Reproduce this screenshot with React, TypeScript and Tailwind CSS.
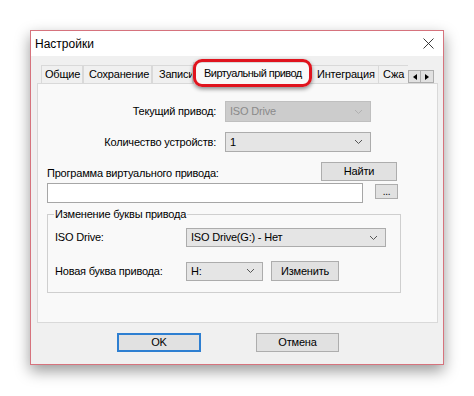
import React from "react";

function Chevron({ muted }: { muted?: boolean }) {
  return (
    <svg width="9" height="6" viewBox="0 0 9 6" className="shrink-0">
      <path d="M1 1 L4.5 4.5 L8 1" fill="none" stroke={muted ? "#b0b0b0" : "#555"} strokeWidth="1" />
    </svg>
  );
}

function Combo({ value, className, disabled }: { value: string; className: string; disabled?: boolean }) {
  return (
    <div
      className={
        "flex items-center justify-between border pl-[4px] pr-[7px] " +
        (disabled ? "bg-[#cccccc] border-[#bfbfbf] text-[#8a8a8a] " : "bg-[#e5e5e5] border-[#acacac] text-black ") +
        className
      }
    >
      <span className="leading-none">{value}</span>
      <Chevron muted={disabled} />
    </div>
  );
}

function Btn({ children, className }: { children: React.ReactNode; className: string }) {
  return (
    <div className={"flex items-center justify-center border border-[#adadad] bg-[#e1e1e1] leading-none " + className}>
      {children}
    </div>
  );
}

const tabs = [
  { label: "Общие", cls: "w-[42px] pl-[3px]" },
  { label: "Сохранение", cls: "w-[69px] pl-[5px]" },
  { label: "Записи", cls: "w-[41px] pl-[6px]" },
];

export default function App() {
  return (
    <div className="w-[474px] h-[396px] bg-white overflow-hidden pt-[30px] pl-[30px] font-['Liberation_Sans',Arial,sans-serif] text-[11px] tracking-[-0.2px] text-black">
      <div className="w-[414px] h-[335px] border border-[#d6737d] bg-[#f0f0f0] flex flex-col shadow-[0_6px_14px_rgba(0,0,0,0.4)]">
        {/* title bar */}
        <div className="h-[25px] bg-white flex items-center justify-between pl-[4px] pr-[9px]">
          <span className="text-[12px] tracking-normal">Настройки</span>
          <svg width="11" height="11" viewBox="0 0 11 11">
            <path d="M0.5 0.5 L10.5 10.5 M10.5 0.5 L0.5 10.5" stroke="#222" strokeWidth="0.9" />
          </svg>
        </div>

        <div className="px-[6px]">
          {/* tab strip */}
          <div className="relative h-[27px] flex items-end pl-[4px]">
            {tabs.map((t) => (
              <div
                key={t.label}
                className={"h-[18px] overflow-hidden whitespace-nowrap border border-b-0 border-[#d9d9d9] bg-[#f0f0f0] flex items-center " + t.cls}
              >
                {t.label}
              </div>
            ))}
            <div className="relative z-10 -mb-px h-[22px] w-[117px] pl-[10px] border border-b-0 border-[#d9d9d9] bg-[#f9f9f9] flex items-center whitespace-nowrap tracking-[-0.55px]">
              Виртуальный привод
            </div>
            <div className="h-[18px] w-[69px] pl-[6px] border border-b-0 border-[#d9d9d9] bg-[#f0f0f0] flex items-center whitespace-nowrap">
              Интеграция
            </div>
            <div className="h-[18px] w-[29px] pl-[4px] border-t border-[#d9d9d9] bg-[#f0f0f0] flex items-center whitespace-nowrap">
              Сжа
            </div>
            <div className="flex self-start mt-[14px]">
              <div className="w-[13px] h-[13px] border border-[#adadad] bg-[#e1e1e1] flex items-center justify-center">
                <svg width="4" height="6" viewBox="0 0 4 6">
                  <path d="M4 0 L0 3 L4 6 Z" fill="#000" />
                </svg>
              </div>
              <div className="w-[13px] h-[13px] border border-l-0 border-[#adadad] bg-[#e1e1e1] flex items-center justify-center">
                <svg width="4" height="6" viewBox="0 0 4 6">
                  <path d="M0 0 L4 3 L0 6 Z" fill="#000" />
                </svg>
              </div>
            </div>
            {/* red highlight around the selected tab */}
            <div className="absolute left-[156px] top-[3px] w-[119px] h-[28px] z-20 rounded-[9px] border-[3px] border-[#e0141e] shadow-[0_2px_4px_rgba(0,0,0,0.45)]" />
          </div>

          {/* tab page */}
          <div className="w-[401px] h-[240px] border border-[#d9d9d9] bg-[#f9f9f9] pl-[9px] pt-[17px]">
            <div className="flex items-center h-[21px]">
              <span className="w-[169px] text-right">Текущий привод:</span>
              <Combo value="ISO Drive" disabled className="ml-[9px] w-[146px] h-[21px]" />
            </div>
            <div className="flex items-center h-[20px] mt-[10px]">
              <span className="w-[169px] text-right">Количество устройств:</span>
              <Combo value="1" className="ml-[9px] w-[146px] h-[20px]" />
            </div>
            <div className="flex justify-between items-start w-[350px] h-[21px] mt-[10px]">
              <span className="mt-[4px] leading-[14px]">Программа виртуального привода:</span>
              <Btn className="w-[76px] h-[19px]">Найти</Btn>
            </div>
            <div className="flex items-start">
              <div className="w-[316px] h-[20px] border border-[#a6a6a6] bg-white" />
              <Btn className="ml-[12px] mt-[1px] w-[23px] h-[15px] text-[10px]">...</Btn>
            </div>

            {/* group box */}
            <div className="relative mt-[11px] w-[354px] h-[79px] border border-[#cfcfcf] pl-[7px] pt-[13px]">
              <span className="absolute left-[6px] top-[-8px] bg-[#f9f9f9] px-[1px] leading-[14px]">
                Изменение буквы привода
              </span>
              <div className="flex items-center h-[19px]">
                <span className="w-[131px]">ISO Drive:</span>
                <Combo value="ISO Drive(G:) - Нет" className="w-[200px] h-[19px]" />
              </div>
              <div className="flex items-center h-[20px] mt-[14px]">
                <span className="w-[131px]">Новая буква привода:</span>
                <Combo value="H:" className="w-[77px] h-[19px]" />
                <Btn className="ml-[8px] w-[68px] h-[20px]">Изменить</Btn>
              </div>
            </div>
          </div>

          {/* dialog buttons */}
          <div className="flex mt-[10px] pl-[80px]">
            <div className="w-[84px] h-[19px] border-2 border-[#2e7fd1] bg-[#e1e1e1] flex items-center justify-center leading-none">
              OK
            </div>
            <Btn className="ml-[55px] w-[83px] h-[19px]">Отмена</Btn>
          </div>
        </div>
      </div>
    </div>
  );
}
